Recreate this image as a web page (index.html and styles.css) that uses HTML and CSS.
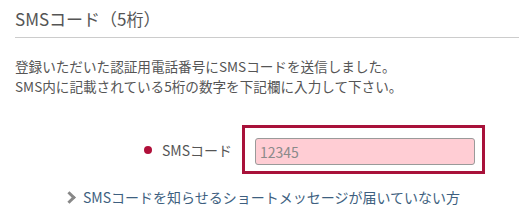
FILE: index.html
```html
<!DOCTYPE html>
<html lang="ja">
<head>
  <meta charset="UTF-8" />
  <meta name="viewport" content="width=device-width, initial-scale=1" />
  <title>SMSコード入力</title>
  <link rel="stylesheet" href="styles.css">
</head>
<body>

  <div class="section">
    <h2 class="section-title">SMSコード（5桁）</h2>

    <p class="lead">
      登録いただいた認証用電話番号にSMSコードを送信しました。<br>
      SMS内に記載されている5桁の数字を下記欄に入力して下さい。
    </p>

    <div class="form-row">
      <span class="required-dot"></span>
      <label class="form-label" for="sms-code">SMSコード</label>
      <div class="input-frame">
        <input id="sms-code" class="code-input" type="text" placeholder="12345" maxlength="5">
      </div>
    </div>

    <div class="help-row">
      <span class="chevron"></span>
      <a href="#" class="help-link">SMSコードを知らせるショートメッセージが届いていない方</a>
    </div>
  </div>

</body>
</html>
```

FILE: styles.css
```css
body {
  margin: 0;
  background: #fff;
  font-family: "Noto Sans CJK JP", "Noto Sans", sans-serif;
  color: #555;
}

.section {
  padding: 6px 0 0 15px;
}

.section-title {
  margin: 0;
  font-size: 17px;
  font-weight: normal;
  line-height: 26px;
  color: #555;
  padding-bottom: 5px;
  border-bottom: 1px solid #ccc;
}

.lead {
  margin: 18px 0 0;
  font-size: 13.6px;
  line-height: 20px;
  color: #555;
}

.form-row {
  display: flex;
  align-items: center;
  margin-top: 29px;
  padding-left: 129px;
}

.required-dot {
  width: 8px;
  height: 8px;
  border-radius: 50%;
  background: #b0103a;
  margin-right: 10px;
}

.form-label {
  font-size: 14px;
  color: #555;
  width: 80px;
}

.input-frame {
  border: 3px solid #a8123a;
  padding: 10px 7px 6px 10px;
}

.code-input {
  display: block;
  box-sizing: border-box;
  width: 220px;
  height: 27px;
  margin: 0;
  padding: 0 4px;
  border: 1px solid #9a9a9a;
  border-radius: 3px;
  background: #ffcdd4;
  font-family: inherit;
  font-size: 14px;
  color: #555;
  outline: none;
}

.code-input::placeholder {
  color: #8a8a8a;
}

.help-row {
  display: flex;
  align-items: center;
  margin-top: 13px;
  padding-left: 50px;
}

.chevron {
  width: 6px;
  height: 6px;
  border-top: 3px solid #888;
  border-right: 3px solid #888;
  transform: rotate(45deg);
  margin-right: 9px;
}

.help-link {
  font-size: 14px;
  color: #3e5f80;
  text-decoration: none;
}
```
